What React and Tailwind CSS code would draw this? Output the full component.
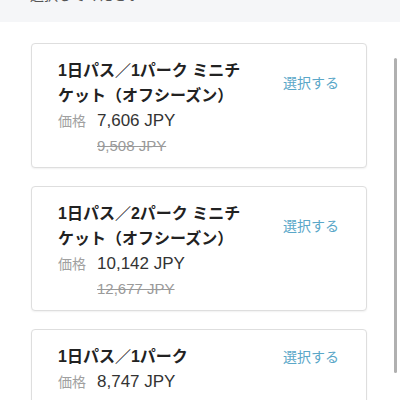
import React from "react";

const font = { fontFamily: '"Liberation Sans", "Noto Sans CJK JP", sans-serif' };

function Card({ lines, price, orig }) {
  return (
    <div className="border border-[#dedede] rounded-[4px] shadow-[0_1px_2px_rgba(0,0,0,0.06)] bg-white pl-[26px] pr-[27px] pt-[14px] pb-[8px]">
      <div className="flex items-center justify-between">
        <div className="w-[192px] text-[16px] leading-[25px] font-bold text-[#222]">
          {lines.map((l, i) => (
            <div key={i}>{l}</div>
          ))}
        </div>
        <div className="text-[14px] leading-[20px] text-[#5aa7c8]">選択する</div>
      </div>
      <div className="flex items-center h-[24px] mt-[1px]">
        <span className="w-[39px] text-[14px] text-[#a0a0a0]">価格</span>
        <span className="text-[17px] text-[#333]">{price}</span>
      </div>
      <div className="pl-[39px] h-[26px] flex items-center text-[15px] text-[#9a9a9a] line-through">{orig}</div>
    </div>
  );
}

export default function App() {
  return (
    <div style={font} className="relative w-[400px] h-[400px] overflow-hidden bg-white">
      <div className="h-[22px] bg-[#f5f6f8] flex items-start justify-between pl-[30px] pr-[22px] overflow-hidden">
        <span className="text-[14px] leading-[18px] text-[#555] mt-[-14px]">選択してください</span>
        <span className="text-[17px] leading-[20px] text-[#333] mt-[-15px]">✕</span>
      </div>
      <div className="flex flex-col gap-[18px] pl-[31px] pr-[33px] pt-[21px]">
        <Card lines={["1日パス／1パーク ミニチ", "ケット（オフシーズン）"]} price="7,606 JPY" orig="9,508 JPY" />
        <Card lines={["1日パス／2パーク ミニチ", "ケット（オフシーズン）"]} price="10,142 JPY" orig="12,677 JPY" />
        <Card lines={["1日パス／1パーク"]} price="8,747 JPY" orig="10,934 JPY" />
      </div>
      <div className="absolute left-[394px] top-[58px] w-[3px] h-[315px] rounded-full bg-[#b0b0b0]" />
    </div>
  );
}
